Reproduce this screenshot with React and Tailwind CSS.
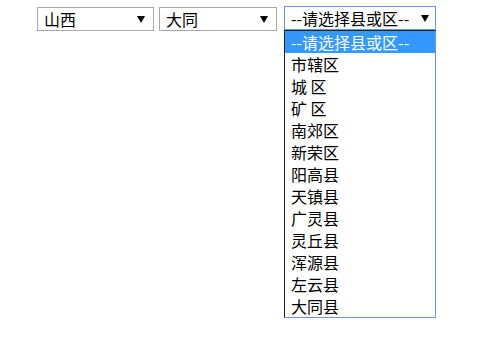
import React from "react";

const items = [
  "市辖区",
  "城 区",
  "矿 区",
  "南郊区",
  "新荣区",
  "阳高县",
  "天镇县",
  "广灵县",
  "灵丘县",
  "浑源县",
  "左云县",
  "大同县",
];

function Arrow() {
  return (
    <svg width="8" height="7" viewBox="0 0 8 7" className="shrink-0">
      <path d="M0 0 H8 L4 7 Z" fill="#000" />
    </svg>
  );
}

export default function App() {
  const font = { fontFamily: '"Noto Sans CJK SC", "Liberation Sans", sans-serif' };
  return (
    <div className="w-[484px] h-[362px] bg-white text-black" style={font}>
      <div className="flex items-start pl-[37px] pt-[7px]">
        <div className="w-[117px] h-[24px] border border-[#a9a9a9] flex items-center justify-between pl-[6px] pr-[8px] text-[16px] leading-none">
          <span>山西</span>
          <Arrow />
        </div>
        <div className="ml-[5px] w-[118px] h-[24px] border border-[#a9a9a9] flex items-center justify-between pl-[6px] pr-[8px] text-[16px] leading-none">
          <span>大同</span>
          <Arrow />
        </div>
        <div className="relative ml-[7px] -mt-[1px]">
          <div className="w-[152px] h-[24px] border border-[#6f97d6] flex items-center justify-between pl-[6px] pr-[6px] text-[16px] leading-none">
            <span>--请选择县或区--</span>
            <Arrow />
          </div>
          <div className="absolute left-0 top-[24px] w-[152px] border border-[#6f97d6] border-l-[#222] border-t-[#222] bg-white">
            <div className="h-[22px] flex items-center px-[6px] bg-[#3399ff] text-white text-[16px] leading-none">
              --请选择县或区--
            </div>
            {items.map((t) => (
              <div key={t} className="h-[22px] flex items-center px-[6px] text-[16px] leading-none whitespace-pre">
                {t}
              </div>
            ))}
          </div>
        </div>
      </div>
    </div>
  );
}
